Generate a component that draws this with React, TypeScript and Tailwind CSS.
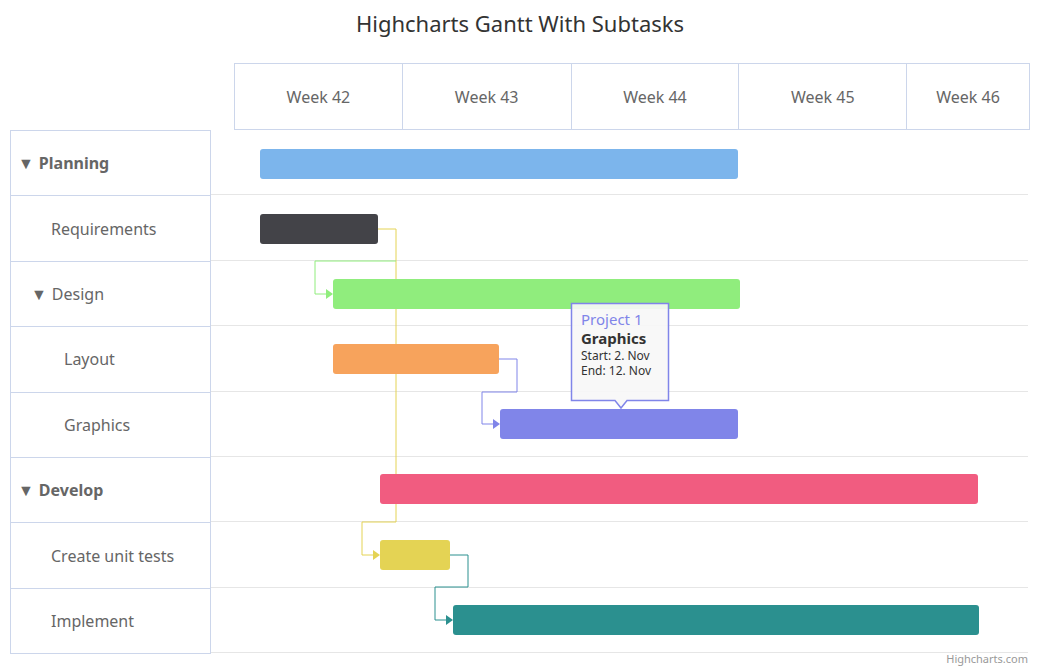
const weeks = [
  { label: "Week 42", w: "w-[168px]" },
  { label: "Week 43", w: "w-[169px]" },
  { label: "Week 44", w: "w-[168px]" },
  { label: "Week 45", w: "w-[168px]" },
  { label: "Week 46", w: "w-[122px]" },
];

const rows = [
  { name: "Planning", level: 0, bold: true, toggle: true },
  { name: "Requirements", level: 1 },
  { name: "Design", level: 1, toggle: true },
  { name: "Layout", level: 2 },
  { name: "Graphics", level: 2 },
  { name: "Develop", level: 0, bold: true, toggle: true },
  { name: "Create unit tests", level: 1 },
  { name: "Implement", level: 1 },
];

const bars = [
  { x: 260, y: 149, w: 478, c: "#7cb5ec" },
  { x: 260, y: 214, w: 118, c: "#434348" },
  { x: 333, y: 279, w: 407, c: "#90ed7d" },
  { x: 333, y: 344, w: 166, c: "#f7a35c" },
  { x: 500, y: 409, w: 238, c: "#8085e9" },
  { x: 380, y: 474, w: 598, c: "#f15c80" },
  { x: 380, y: 540, w: 70, c: "#e4d354" },
  { x: 453, y: 605, w: 526, c: "#2b908f" },
];

const links = [
  { d: "M378 229 H396 V522 H362 V555 H374", c: "#e4d354", ax: 380, ay: 555 },
  { d: "M396 261 H315 V294 H327", c: "#90ed7d", ax: 333, ay: 294 },
  { d: "M499 359 H517 V392 H482 V424 H494", c: "#8085e9", ax: 500, ay: 424 },
  { d: "M450 555 H468 V587 H435 V620 H447", c: "#2b908f", ax: 453, ay: 620 },
];

export default function App() {
  return (
    <div className="relative w-[1040px] h-[672px] bg-white text-[#666666] font-['DejaVu_Sans',sans-serif] overflow-hidden">
      <h1 className="pt-[7px] h-[63px] text-center text-[22px] text-[#333333]">Highcharts Gantt With Subtasks</h1>

      {/* week header */}
      <div className="flex ml-[234px] h-[67px] border border-[#ccd6eb] w-[796px]">
        {weeks.map((w, i) => (
          <div key={w.label} className={`${w.w} flex items-center justify-center text-[16px] ${i < weeks.length - 1 ? "border-r border-[#ccd6eb]" : ""}`}>
            {w.label}
          </div>
        ))}
      </div>

      {/* body */}
      <div className="flex ml-[10px] w-[1018px]">
        <div className="w-[201px] border border-[#ccd6eb] border-t-0">
          {rows.map((r, i) => (
            <div
              key={r.name}
              className={`h-[65.4px] flex items-center text-[16px] border-t border-[#ccd6eb] ${r.bold ? "font-bold" : ""} ${
                r.level === 0 ? "pl-[7px]" : r.level === 1 ? (r.toggle ? "pl-[20px]" : "pl-[40px]") : "pl-[53px]"
              } ${i === 0 ? "border-t" : ""}`}
            >
              {r.toggle && <span className="mr-[5px] text-[#666] text-[16px]">▼</span>}
              {r.name}
            </div>
          ))}
        </div>
        <div className="flex-1">
          {rows.map((r) => (
            <div key={r.name} className="h-[65.4px] border-b border-[#e6e6e6]" />
          ))}
        </div>
      </div>

      <svg className="absolute top-0 left-0 pointer-events-none" width="1040" height="672">
        {links.map((l) => (
          <g key={l.d}>
            <path d={l.d} fill="none" stroke={l.c} strokeWidth="1" />
            <path d={`M${l.ax - 7} ${l.ay - 5} L${l.ax} ${l.ay} L${l.ax - 7} ${l.ay + 5} Z`} fill={l.c} />
          </g>
        ))}
        {bars.map((b) => (
          <rect key={b.y} x={b.x} y={b.y} width={b.w} height="30" rx="3" fill={b.c} />
        ))}
        <path d="M571.5 303.5 H668.5 V400.5 H627 L621 408 L615 400.5 H571.5 Z" fill="#f7f7f7" fillOpacity="0.92" stroke="#8085e9" strokeWidth="1.5" />
      </svg>

      <div className="absolute left-[581px] top-[312px] leading-none">
        <div className="text-[15px] text-[#8085e9]">Project 1</div>
        <div className="text-[15px] font-bold text-[#333] mt-[4px]">Graphics</div>
        <div className="text-[12px] text-[#333] mt-[4px]">Start: 2. Nov</div>
        <div className="text-[12px] text-[#333] mt-[3px]">End: 12. Nov</div>
      </div>

      <div className="absolute right-[12px] bottom-[5px] text-[11px] text-[#999999]">Highcharts.com</div>
    </div>
  );
}
